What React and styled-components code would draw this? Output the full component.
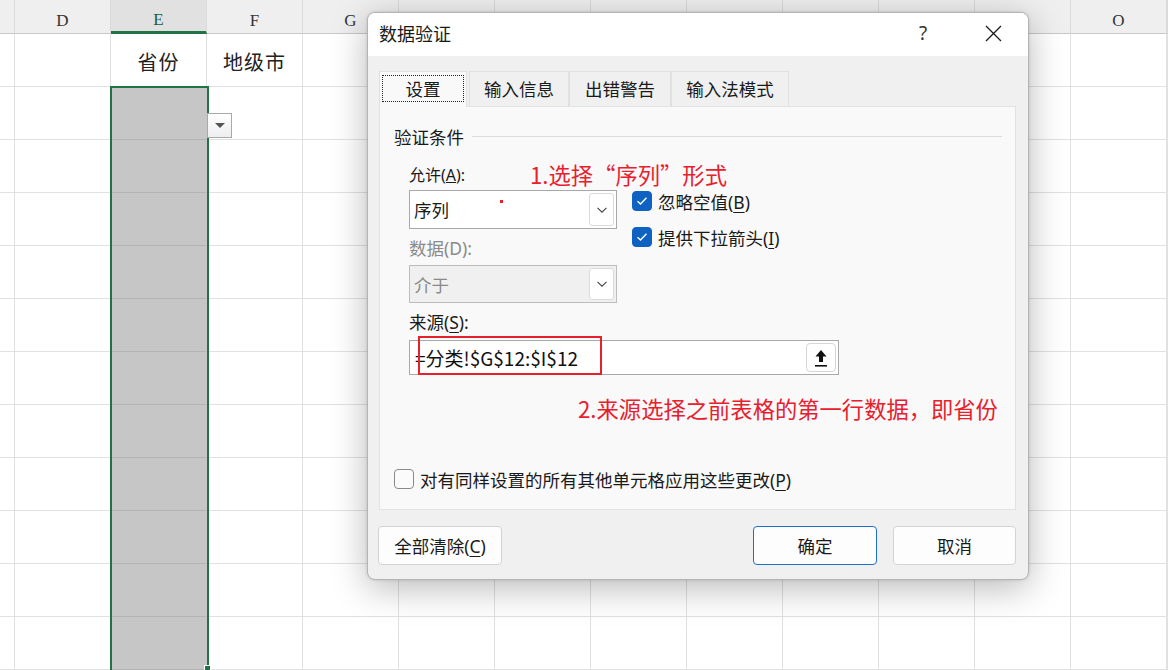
import React from 'react';
import styled, { createGlobalStyle } from 'styled-components';

const GlobalStyle = createGlobalStyle`
  html, body, #root {
    margin: 0;
    padding: 0;
    width: 100%;
    height: 100%;
    overflow: hidden;
    background: #ffffff;
  }
  * { box-sizing: border-box; }
`;

const UI_FONT = `"Noto Sans", "Noto Sans CJK SC", sans-serif`;
const CJK_FONT = `"Noto Sans CJK SC", sans-serif`;
const GREEN = '#217346';
const RED = '#e8202d';
const BLUE = '#0f62c2';

// columns H..N sit under the dialog, so their letters are never seen
const COLS = ['', 'D', 'E', 'F', 'G', 'H', 'I', 'J', 'K', 'L', 'M', 'N', 'O'];
const HIDDEN = ['H', 'I', 'J', 'K', 'L', 'M', 'N'];
const ROW_COUNT = 12;

const Page = styled.div`
  position: relative;
  width: 1168px;
  height: 670px;
  overflow: hidden;
`;

const Sheet = styled.div`
  display: grid;
  grid-template-columns: 15px repeat(12, 96px) 1fr;
  grid-template-rows: 34px repeat(${ROW_COUNT}, 53px);
  width: 100%;
  height: 100%;
`;

const HeadCell = styled.div`
  display: flex;
  align-items: center;
  justify-content: center;
  padding-top: 8px;
  background: ${p => (p.$selected ? '#e1e1e1' : '#efefef')};
  border-right: 1px solid #dadada;
  border-bottom: ${p => (p.$selected ? `3px solid ${GREEN}` : '1px solid #c8c8c8')};
  font-family: "Liberation Serif", serif;
  font-size: 17px;
  color: ${p => (p.$selected ? '#1d5c38' : '#333')};
`;

const Cell = styled.div`
  position: relative;
  display: flex;
  align-items: center;
  justify-content: center;
  background: ${p => (p.$fill ? '#c6c6c6' : '#fff')};
  border-right: 1px solid ${p => (p.$fill ? '#c6c6c6' : '#e1e1e1')};
  border-bottom: 1px solid ${p => (p.$fill ? '#b3b3b3' : '#e1e1e1')};
  font-family: "Noto Sans CJK SC", serif;
  font-size: 20px;
  padding-top: 2px;
  color: #222;
  letter-spacing: 1px;
`;

const Selection = styled.div`
  position: absolute;
  left: 110px;
  top: 86px;
  width: 99px;
  height: 590px;
  border: 2px solid ${GREEN};
  pointer-events: none;
`;

const FillHandle = styled.div`
  position: absolute;
  left: 204px;
  top: 665px;
  width: 7px;
  height: 7px;
  background: ${GREEN};
  border: 1px solid #fff;
`;

const CellDrop = styled.div`
  position: absolute;
  right: -26px;
  top: 26px;
  width: 25px;
  height: 25px;
  background: linear-gradient(#ffffff, #eeeef0);
  border: 1px solid #a9a9a9;
  display: flex;
  align-items: center;
  justify-content: center;
  z-index: 2;
  &::after {
    content: '';
    border-left: 5px solid transparent;
    border-right: 5px solid transparent;
    border-top: 5px solid #555;
  }
`;

/* ---------- dialog ---------- */

const Dialog = styled.div`
  position: absolute;
  left: 367px;
  top: 12px;
  width: 662px;
  height: 568px;
  display: flex;
  flex-direction: column;
  border: 1px solid #b4b4b4;
  border-radius: 8px;
  overflow: hidden;
  background: #f0f0f0;
  box-shadow: 0 8px 36px rgba(0, 0, 0, 0.28), 0 0 3px rgba(0, 0, 0, 0.15);
  font-family: ${UI_FONT};
  color: #1a1a1a;
`;

const TitleBar = styled.div`
  height: 43px;
  flex: none;
  display: flex;
  align-items: center;
  padding: 0 0 3px 11px;
  background: #fff;
`;

const Title = styled.div`
  flex: 1;
  font-size: 18px;
`;

const TitleButton = styled.div`
  width: 46px;
  height: 40px;
  display: flex;
  align-items: center;
  justify-content: center;
  font-size: 19px;
  color: #333;
  margin-right: ${p => p.$gap || 0}px;
`;

const Body = styled.div`
  flex: 1;
  display: flex;
  flex-direction: column;
  padding: 14px 12px 13px 11px;
`;

const TabRow = styled.div`
  display: flex;
  height: 36px;
  align-items: flex-end;
`;

const Tab = styled.div`
  width: ${p => p.$w}px;
  height: ${p => (p.$active ? 36 : 35)}px;
  margin-right: ${p => (p.$active ? 2 : 0)}px;
  display: flex;
  align-items: center;
  justify-content: center;
  padding-bottom: 2px;
  font-size: 17.5px;
  background: ${p => (p.$active ? '#f9f9f9' : '#f0f0f0')};
  border: 1px solid #e0e0e0;
  border-bottom: none;
  position: relative;
  top: ${p => (p.$active ? 1 : 0)}px;
`;

const FocusRing = styled.span`
  display: flex;
  align-items: center;
  justify-content: center;
  width: 82px;
  height: 27px;
  border: 1px dotted #222;
`;

const Panel = styled.div`
  height: 404px;
  background: #f9f9f9;
  border: 1px solid #e2e2e2;
  padding: 18px 13px 0 14px;
  display: flex;
  flex-direction: column;
`;

const Legend = styled.div`
  display: flex;
  align-items: center;
  gap: 8px;
  height: 22px;
  font-size: 17.5px;
  &::after {
    content: '';
    flex: 1;
    height: 1px;
    background: #dcdcdc;
  }
`;

const Form = styled.div`
  margin-top: 13px;
  margin-left: 15px;
  display: grid;
  grid-template-columns: 208px 1fr;
  column-gap: 15px;
  align-items: start;
`;

const LabelLine = styled.div`
  grid-column: 1 / -1;
  grid-row: 1;
  display: grid;
  grid-template-columns: 121px auto;
  align-items: center;
  height: 26px;
`;

const Label = styled.div`
  font-size: 17.5px;
  color: ${p => (p.$disabled ? '#8a8a8a' : '#1a1a1a')};
  line-height: 26px;
  grid-column: ${p => p.$col || '1 / -1'};
  grid-row: ${p => p.$row};
  height: 26px;
  margin-top: 6px;
  u { text-decoration-thickness: 1px; text-underline-offset: 3px; }
`;

const Note = styled.div`
  font-family: ${CJK_FONT};
  font-size: 22.3px;
  color: ${RED};
  white-space: nowrap;
  grid-column: ${p => (p.$row ? '1 / -1' : 'auto')};
  grid-row: ${p => p.$row || 'auto'};
  margin-left: ${p => p.$ml || 0}px;
  margin-top: ${p => p.$mt || 0}px;
  line-height: 28px;
`;

const Select = styled.div`
  grid-column: 1;
  grid-row: ${p => p.$row};
  height: ${p => (p.$disabled ? 38 : 39)}px;
  margin-top: 4px;
  display: flex;
  align-items: center;
  padding: 2px 2px 2px 4px;
  background: ${p => (p.$disabled ? '#f0f0f0' : '#fff')};
  border: 1px solid ${p => (p.$disabled ? '#bdbdbd' : '#a8a8a8')};
  font-size: 17.5px;
  color: ${p => (p.$disabled ? '#8a8a8a' : '#1a1a1a')};
  position: relative;
`;

const SelectText = styled.div`
  flex: 1;
`;

const DropBtn = styled.div`
  width: 25px;
  align-self: stretch;
  display: flex;
  align-items: center;
  justify-content: center;
  background: #fff;
  border: 1px solid #dadada;
  border-radius: 3px;
`;

const RedDot = styled.span`
  position: absolute;
  left: 90px;
  top: 9px;
  width: 3px;
  height: 3px;
  background: ${RED};
`;

const CheckList = styled.div`
  grid-column: 2;
  grid-row: 2 / span 3;
  padding-top: 3px;
  display: flex;
  flex-direction: column;
  gap: 12px;
`;

const CheckItem = styled.div`
  display: flex;
  align-items: center;
  gap: 6px;
  height: 24px;
  font-size: 17.5px;
  margin-top: ${p => p.$mt || 0}px;
  u { text-decoration-thickness: 1px; text-underline-offset: 3px; }
`;

const Box = styled.span`
  width: 20px;
  height: 20px;
  flex: none;
  border-radius: 4px;
  display: flex;
  align-items: center;
  justify-content: center;
  background: ${p => (p.$checked ? BLUE : '#fbfbfb')};
  border: 1px solid ${p => (p.$checked ? BLUE : '#8a8a8a')};
`;

const SourceRow = styled.div`
  grid-column: 1 / -1;
  grid-row: 6;
  width: 430px;
  height: 35px;
  margin-top: 5px;
  display: flex;
  align-items: center;
  padding: 2px 2px 2px 5px;
  background: #fff;
  border: 1px solid #a8a8a8;
  position: relative;
`;

const SourceText = styled.div`
  flex: 1;
  font-family: ${CJK_FONT};
  font-size: 19px;
  color: #111;
`;

const RedFrame = styled.div`
  position: absolute;
  left: 8px;
  top: -5px;
  width: 184px;
  height: 39px;
  border: 2px solid ${RED};
`;

const PickBtn = styled.div`
  width: 30px;
  align-self: stretch;
  display: flex;
  align-items: center;
  justify-content: center;
  background: #fff;
  border: 1px solid #d6d6d6;
  border-radius: 4px;
`;

const Footer = styled.div`
  margin-top: 16px;
  margin-left: -1px;
  display: flex;
  gap: 16px;
`;

const Button = styled.div`
  width: ${p => p.$w || 124}px;
  height: 39px;
  display: flex;
  align-items: center;
  justify-content: center;
  font-size: 17.5px;
  background: #fdfdfd;
  border: 1px solid ${p => (p.$primary ? '#1e6fc8' : '#d3d3d3')};
  border-radius: 4px;
  margin-left: ${p => (p.$push ? 'auto' : 0)};
  u { text-decoration-thickness: 1px; text-underline-offset: 3px; }
`;

const Chevron = () => (
  <svg width="12" height="8" viewBox="0 0 12 8">
    <path d="M1.5 1.8 L6 6.2 L10.5 1.8" fill="none" stroke="#444" strokeWidth="1.1" />
  </svg>
);

const Tick = () => (
  <svg width="12" height="10" viewBox="0 0 12 10">
    <path d="M1.5 5.2 L4.5 8 L10.5 1.8" fill="none" stroke="#fff" strokeWidth="1.4" />
  </svg>
);

const CloseIcon = () => (
  <svg width="17" height="17" viewBox="0 0 17 17">
    <path d="M1 1 L16 16 M16 1 L1 16" stroke="#1a1a1a" strokeWidth="1.3" />
  </svg>
);

const PickIcon = () => (
  <svg width="14" height="20" viewBox="0 0 14 20">
    <path d="M7 2 L12.5 8.5 H9 V14 H5 V8.5 H1.5 Z" fill="#111" />
    <rect x="1" y="17" width="12" height="1.6" fill="#111" />
  </svg>
);

export default function App() {
  const rows = Array.from({ length: ROW_COUNT }, (_, r) => r + 1);

  return (
    <>
      <GlobalStyle />
      <Page>
        <Sheet>
          {COLS.map((c, i) => (
            <HeadCell key={`h${i}`} $selected={c === 'E'}>
              {HIDDEN.includes(c) ? '' : c}
            </HeadCell>
          ))}
          <HeadCell />
          {rows.map(r =>
            [...COLS, 'P'].map((c, i) => {
              let text = '';
              if (r === 1 && c === 'E') text = '省份';
              if (r === 1 && c === 'F') text = '地级市';
              return (
                <Cell key={`${r}-${i}`} $fill={c === 'E' && r > 1}>
                  {text}
                  {r === 2 && c === 'E' && <CellDrop />}
                </Cell>
              );
            })
          )}
        </Sheet>
        <Selection />
        <FillHandle />

        <Dialog>
          <TitleBar>
            <Title>数据验证</Title>
            <TitleButton $gap={24}>?</TitleButton>
            <TitleButton $gap={12}><CloseIcon /></TitleButton>
          </TitleBar>
          <Body>
            <TabRow>
              <Tab $w={88} $active><FocusRing>设置</FocusRing></Tab>
              <Tab $w={100}>输入信息</Tab>
              <Tab $w={102}>出错警告</Tab>
              <Tab $w={118}>输入法模式</Tab>
            </TabRow>
            <Panel>
              <Legend>验证条件</Legend>
              <Form>
                <LabelLine>
                  <span>允许(<u>A</u>):</span>
                  <Note>1.选择“序列”形式</Note>
                </LabelLine>
                <Select $row={2}>
                  <SelectText>序列</SelectText>
                  <RedDot />
                  <DropBtn><Chevron /></DropBtn>
                </Select>
                <CheckList>
                  <CheckItem>
                    <Box $checked><Tick /></Box>
                    <span>忽略空值(<u>B</u>)</span>
                  </CheckItem>
                  <CheckItem>
                    <Box $checked><Tick /></Box>
                    <span>提供下拉箭头(<u>I</u>)</span>
                  </CheckItem>
                </CheckList>
                <Label $disabled $col="1" $row={3}>数据(D):</Label>
                <Select $disabled $row={4}>
                  <SelectText>介于</SelectText>
                  <DropBtn><Chevron /></DropBtn>
                </Select>
                <Label $row={5}>来源(<u>S</u>):</Label>
                <SourceRow>
                  <SourceText>=分类!$G$12:$I$12</SourceText>
                  <RedFrame />
                  <PickBtn><PickIcon /></PickBtn>
                </SourceRow>
                <Note $row={7} $ml={169} $mt={19}>
                  2.来源选择之前表格的第一行数据，即省份
                </Note>
              </Form>
              <CheckItem $mt={45}>
                <Box />
                <span>对有同样设置的所有其他单元格应用这些更改(<u>P</u>)</span>
              </CheckItem>
            </Panel>
            <Footer>
              <Button>全部清除(<u>C</u>)</Button>
              <Button $primary $push>确定</Button>
              <Button $w={123}>取消</Button>
            </Footer>
          </Body>
        </Dialog>
      </Page>
    </>
  );
}
